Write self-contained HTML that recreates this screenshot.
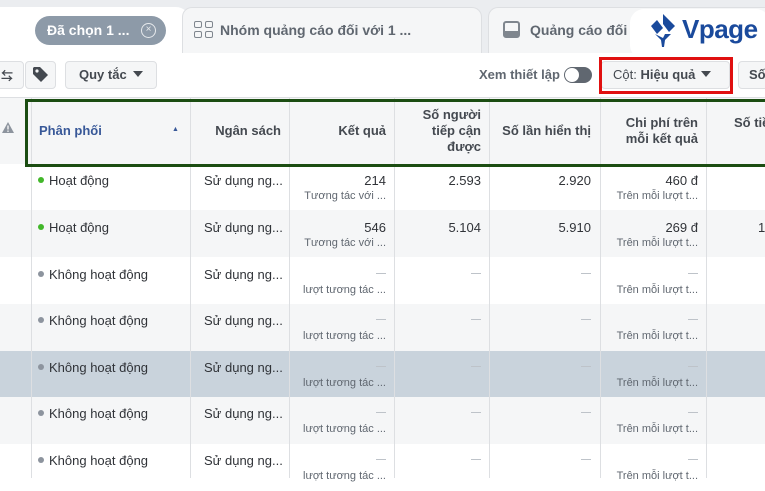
<!DOCTYPE html>
<html><head><meta charset="utf-8"><style>
*{margin:0;padding:0;box-sizing:border-box}
body{width:765px;height:478px;overflow:hidden;position:relative;background:#fff;font-family:"Liberation Sans","Noto Sans CJK SC",sans-serif;color:#1c1e21}
.a{position:absolute}
.vl{position:absolute;top:97px;bottom:0;width:1px;background:#dddfe2}
.row{position:absolute;left:0;width:765px;height:47px}
.t{position:absolute;font-size:13px;color:#303338;white-space:nowrap}
.s{position:absolute;font-size:11px;color:#606770;white-space:nowrap}
.r{text-align:right}
.dot{display:inline-block;width:6px;height:6px;border-radius:50%;margin-right:5px;vertical-align:2px}
.h{position:absolute;font-size:13px;font-weight:bold;color:#444950;text-align:right;line-height:16px}
.dash{position:absolute;width:10px;height:1px;background:#bec3c9}
.tri{display:inline-block;width:0;height:0;border-left:5px solid transparent;border-right:5px solid transparent;border-top:6px solid #444950;vertical-align:2px;margin-left:6px}
</style></head><body>
<div class="a" style="left:0;top:0;width:765px;height:53px;background:#ebedf0"></div>
<div class="a" style="left:0;top:7px;width:190px;height:47px;background:#fff;border-radius:0 14px 0 0"></div>
<div class="a" style="left:35px;top:16px;width:131px;height:29px;background:#8d9aa8;border-radius:15px"></div>
<div class="a" style="left:47px;top:22px;font-size:14px;font-weight:bold;color:#fff">Đã chọn 1 ...</div>
<div class="a" style="left:141px;top:23px;width:15px;height:15px;border:1.5px solid #e6e9ec;border-radius:50%;color:#e6e9ec;font-size:10px;line-height:12px;text-align:center">×</div>
<div class="a" style="left:182px;top:7px;width:300px;height:46px;background:#f5f6f7;border:1px solid #dddfe2;border-bottom:none;border-radius:10px 10px 0 0"></div>
<div class="a" style="left:194px;top:21px;width:8px;height:7px;border:1.5px solid #7f868e;border-radius:2px"></div>
<div class="a" style="left:205px;top:21px;width:8px;height:7px;border:1.5px solid #7f868e;border-radius:2px"></div>
<div class="a" style="left:194px;top:31px;width:8px;height:7px;border:1.5px solid #7f868e;border-radius:2px"></div>
<div class="a" style="left:205px;top:31px;width:8px;height:7px;border:1.5px solid #7f868e;border-radius:2px"></div>
<div class="a" style="left:220px;top:22px;font-size:14px;font-weight:bold;color:#606770">Nhóm quảng cáo đối với 1 ...</div>
<div class="a" style="left:488px;top:7px;width:290px;height:46px;background:#f5f6f7;border:1px solid #dddfe2;border-bottom:none;border-radius:10px 10px 0 0"></div>
<div class="a" style="left:503px;top:21px;width:17px;height:17px;border:2px solid #7f868e;border-radius:3px"></div>
<div class="a" style="left:505px;top:31px;width:13px;height:5px;background:#7f868e"></div>
<div class="a" style="left:530px;top:22px;font-size:14px;font-weight:bold;color:#606770">Quảng cáo đối với 1</div>
<div class="a" style="left:630px;top:9px;width:140px;height:50px;background:#fff;border-radius:14px"></div>
<svg class="a" style="left:645px;top:12px" width="36" height="36" viewBox="0 0 36 36"><path d="M18 2 L30 14 L24 20 L18 12 Z M6 14 L12 8 L18 16 L12 22 Z" fill="#1a4a9c"/><path d="M10 22 L18 30 L26 22 L20 22 L18 26 Z" fill="#1a4a9c"/><path d="M16 28 L20 28 L19 35 L17 35Z" fill="#1a4a9c"/></svg>
<div class="a" style="left:682px;top:14px;font-size:26px;font-weight:bold;color:#1a4a9c;letter-spacing:-0.5px">Vpage</div>
<div class="a" style="left:-4px;top:61px;width:28px;height:28px;border:1px solid #dddfe2;border-radius:4px;background:#f5f6f7"></div>
<div class="a" style="left:1px;top:67px;font-size:12px;color:#444950;font-weight:bold">⇆</div>
<div class="a" style="left:25px;top:61px;width:31px;height:28px;border:1px solid #dddfe2;border-radius:4px;background:#f5f6f7"></div>
<svg class="a" style="left:32px;top:66px" width="17" height="17" viewBox="0 0 17 17"><path d="M1 2 L1 8 L9 16 L16 9 L8 1 L2 1 Z" fill="#444950"/><circle cx="5" cy="5" r="1.6" fill="#f5f6f7"/></svg>
<div class="a" style="left:65px;top:61px;width:92px;height:28px;border:1px solid #dddfe2;border-radius:4px;background:#f5f6f7"></div>
<div class="a" style="left:79px;top:67px;font-size:13px;font-weight:bold;color:#444950">Quy tắc<span class="tri"></span></div>
<div class="a" style="left:479px;top:67px;font-size:13px;font-weight:bold;color:#606770">Xem thiết lập</div>
<div class="a" style="left:564px;top:67px;width:28px;height:16px;border-radius:8px;background:#606770"></div>
<div class="a" style="left:565px;top:68px;width:14px;height:14px;border-radius:50%;background:#fff"></div>
<div class="a" style="left:601px;top:61px;width:129px;height:28px;border:1px solid #dddfe2;border-radius:4px;background:#f5f6f7"></div>
<div class="a" style="left:613px;top:67px;font-size:13px;color:#444950">Cột: <b>Hiệu quả</b><span class="tri"></span></div>
<div class="a" style="left:599px;top:57px;width:134px;height:37px;border:3px solid #e01010"></div>
<div class="a" style="left:738px;top:61px;width:40px;height:28px;border:1px solid #dddfe2;border-radius:4px;background:#f5f6f7"></div>
<div class="a" style="left:749px;top:67px;font-size:13px;font-weight:bold;color:#444950">Số</div>
<div class="a" style="left:0;top:97px;width:765px;height:67px;background:#f5f6f7;border-top:1px solid #dddfe2"></div>
<div class="row" style="top:164px;background:#fff"></div>
<div class="row" style="top:210px;background:#f5f6f7"></div>
<div class="row" style="top:257px;background:#fff"></div>
<div class="row" style="top:304px;background:#f5f6f7"></div>
<div class="row" style="top:351px;background:#c9d3dc"></div>
<div class="row" style="top:397px;background:#f5f6f7"></div>
<div class="row" style="top:444px;background:#fff"></div>
<div class="vl" style="left:31px"></div>
<div class="vl" style="left:190px"></div>
<div class="vl" style="left:289px"></div>
<div class="vl" style="left:394px"></div>
<div class="vl" style="left:489px"></div>
<div class="vl" style="left:600px"></div>
<div class="vl" style="left:706px"></div>
<svg class="a" style="left:2px;top:122px" width="12" height="11" viewBox="0 0 12 11"><path d="M6 0 L12 11 L0 11Z" fill="#8d949e"/><rect x="5.3" y="3.5" width="1.4" height="4" fill="#f5f6f7"/><rect x="5.3" y="8.5" width="1.4" height="1.4" fill="#f5f6f7"/></svg>
<div class="h" style="left:39px;top:123px;color:#385898;text-align:left">Phân phối</div>
<div class="a" style="left:172px;top:126px;font-size:7px;color:#385898">▲</div>
<div class="h" style="left:190px;width:91px;top:123px">Ngân sách</div>
<div class="h" style="left:290px;width:96px;top:123px">Kết quả</div>
<div class="h" style="left:395px;width:86px;top:107px">Số người<br>tiếp cận<br>được</div>
<div class="h" style="left:490px;width:101px;top:123px">Số lần hiển thị</div>
<div class="h" style="left:601px;width:97px;top:115px">Chi phí trên<br>mỗi kết quả</div>
<div class="h" style="left:707px;width:70px;top:115px;text-align:left;padding-left:27px">Số tiề</div>
<div class="a" style="left:25px;top:99px;width:760px;height:68px;border:3px solid #1b4d12"></div>
<div class="t" style="left:38px;top:173px"><span class="dot" style="background:#42b72a"></span>Hoạt động</div>
<div class="t" style="left:204px;top:173px">Sử dụng ng...</div>
<div class="t r" style="left:290px;width:96px;top:173px">214</div>
<div class="s r" style="left:290px;width:96px;top:190px">Tương tác với ...</div>
<div class="t r" style="left:395px;width:86px;top:173px">2.593</div>
<div class="t r" style="left:490px;width:101px;top:173px">2.920</div>
<div class="t r" style="left:601px;width:97px;top:173px">460 đ</div>
<div class="s r" style="left:601px;width:97px;top:190px">Trên mỗi lượt t...</div>
<div class="t" style="left:38px;top:220px"><span class="dot" style="background:#42b72a"></span>Hoạt động</div>
<div class="t" style="left:204px;top:220px">Sử dụng ng...</div>
<div class="t r" style="left:290px;width:96px;top:220px">546</div>
<div class="s r" style="left:290px;width:96px;top:237px">Tương tác với ...</div>
<div class="t r" style="left:395px;width:86px;top:220px">5.104</div>
<div class="t r" style="left:490px;width:101px;top:220px">5.910</div>
<div class="t r" style="left:601px;width:97px;top:220px">269 đ</div>
<div class="s r" style="left:601px;width:97px;top:237px">Trên mỗi lượt t...</div>
<div class="t" style="left:758px;top:220px">1</div>
<div class="t" style="left:38px;top:267px"><span class="dot" style="background:#8d949e"></span>Không hoạt động</div>
<div class="t" style="left:204px;top:267px">Sử dụng ng...</div>
<div class="s r" style="left:290px;width:96px;top:284px">lượt tương tác ...</div>
<div class="s r" style="left:601px;width:97px;top:284px">Trên mỗi lượt t...</div>
<div class="t" style="left:38px;top:313px"><span class="dot" style="background:#8d949e"></span>Không hoạt động</div>
<div class="t" style="left:204px;top:313px">Sử dụng ng...</div>
<div class="s r" style="left:290px;width:96px;top:330px">lượt tương tác ...</div>
<div class="s r" style="left:601px;width:97px;top:330px">Trên mỗi lượt t...</div>
<div class="t" style="left:38px;top:360px"><span class="dot" style="background:#8d949e"></span>Không hoạt động</div>
<div class="t" style="left:204px;top:360px">Sử dụng ng...</div>
<div class="s r" style="left:290px;width:96px;top:377px">lượt tương tác ...</div>
<div class="s r" style="left:601px;width:97px;top:377px">Trên mỗi lượt t...</div>
<div class="t" style="left:38px;top:406px"><span class="dot" style="background:#8d949e"></span>Không hoạt động</div>
<div class="t" style="left:204px;top:406px">Sử dụng ng...</div>
<div class="s r" style="left:290px;width:96px;top:423px">lượt tương tác ...</div>
<div class="s r" style="left:601px;width:97px;top:423px">Trên mỗi lượt t...</div>
<div class="t" style="left:38px;top:453px"><span class="dot" style="background:#8d949e"></span>Không hoạt động</div>
<div class="t" style="left:204px;top:453px">Sử dụng ng...</div>
<div class="s r" style="left:290px;width:96px;top:470px">lượt tương tác ...</div>
<div class="s r" style="left:601px;width:97px;top:470px">Trên mỗi lượt t...</div>
<div class="dash" style="left:376px;top:273px"></div><div class="dash" style="left:471px;top:273px"></div><div class="dash" style="left:581px;top:273px"></div><div class="dash" style="left:688px;top:273px"></div>
<div class="dash" style="left:376px;top:319px"></div><div class="dash" style="left:471px;top:319px"></div><div class="dash" style="left:581px;top:319px"></div><div class="dash" style="left:688px;top:319px"></div>
<div class="dash" style="left:376px;top:366px"></div><div class="dash" style="left:471px;top:366px"></div><div class="dash" style="left:581px;top:366px"></div><div class="dash" style="left:688px;top:366px"></div>
<div class="dash" style="left:376px;top:412px"></div><div class="dash" style="left:471px;top:412px"></div><div class="dash" style="left:581px;top:412px"></div><div class="dash" style="left:688px;top:412px"></div>
<div class="dash" style="left:376px;top:459px"></div><div class="dash" style="left:471px;top:459px"></div><div class="dash" style="left:581px;top:459px"></div><div class="dash" style="left:688px;top:459px"></div>
</body></html>
